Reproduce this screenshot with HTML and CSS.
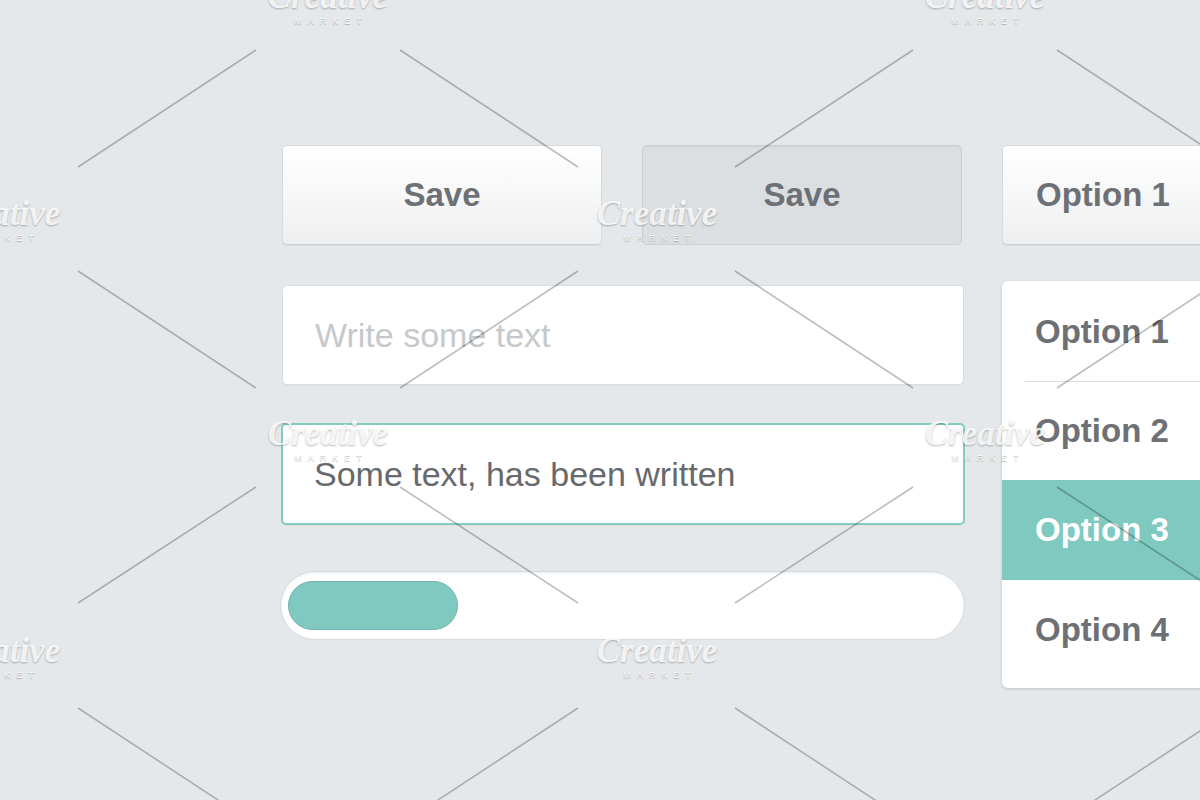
FILE: index.html
```html
<!DOCTYPE html>
<html lang="en">
<head>
<meta charset="utf-8">
<title>UI Kit</title>
<link rel="stylesheet" href="styles.css">
</head>
<body>
<main class="page">
  <section class="left">
    <div class="btn-row">
      <button class="btn">Save</button>
      <button class="btn pressed">Save</button>
    </div>
    <div class="input placeholder">Write some text</div>
    <div class="input active">Some text, has been written</div>
    <div class="progress"><div class="fill" style="width:25.4%"></div></div>
  </section>
  <section class="right">
    <button class="btn select">Option 1</button>
    <ul class="dropdown">
      <li class="opt first">Option 1</li>
      <li class="opt second">Option 2</li>
      <li class="opt sel">Option 3</li>
      <li class="opt">Option 4</li>
    </ul>
  </section>
</main>

<div class="watermark" aria-hidden="true">
  <svg class="wm-lines" width="1200" height="800" viewBox="0 0 1200 800">
    <g stroke="rgba(0,0,0,0.26)" stroke-width="1.6" fill="none">
      <line x1="256" y1="50" x2="78" y2="167"/>
      <line x1="400" y1="50" x2="578" y2="167"/>
      <line x1="913" y1="50" x2="735" y2="167"/>
      <line x1="1057" y1="50" x2="1235" y2="167"/>
      <line x1="78" y1="271" x2="256" y2="388"/>
      <line x1="578" y1="271" x2="400" y2="388"/>
      <line x1="735" y1="271" x2="913" y2="388"/>
      <line x1="1235" y1="271" x2="1057" y2="388"/>
      <line x1="256" y1="487" x2="78" y2="603"/>
      <line x1="400" y1="487" x2="578" y2="603"/>
      <line x1="913" y1="487" x2="735" y2="603"/>
      <line x1="1057" y1="487" x2="1235" y2="603"/>
      <line x1="78" y1="708" x2="256" y2="825"/>
      <line x1="578" y1="708" x2="400" y2="825"/>
      <line x1="735" y1="708" x2="913" y2="825"/>
      <line x1="1235" y1="708" x2="1057" y2="825"/>
    </g>
  </svg>
  <div class="wm wm-a"><span class="wm-name">Creative</span><span class="wm-sub">MARKET</span></div>
  <div class="wm wm-b"><span class="wm-name">Creative</span><span class="wm-sub">MARKET</span></div>
  <div class="wm wm-c"><span class="wm-name">Creative</span><span class="wm-sub">MARKET</span></div>
  <div class="wm wm-d"><span class="wm-name">Creative</span><span class="wm-sub">MARKET</span></div>
  <div class="wm wm-e"><span class="wm-name">Creative</span><span class="wm-sub">MARKET</span></div>
  <div class="wm wm-f"><span class="wm-name">Creative</span><span class="wm-sub">MARKET</span></div>
  <div class="wm wm-g"><span class="wm-name">Creative</span><span class="wm-sub">MARKET</span></div>
  <div class="wm wm-h"><span class="wm-name">Creative</span><span class="wm-sub">MARKET</span></div>
</div>
</body>
</html>
```

FILE: styles.css
```css
html, body {
  margin: 0;
  padding: 0;
}

body {
  position: relative;
  width: 1200px;
  height: 800px;
  overflow: hidden;
  background: #e5e8eb;
  font-family: "Liberation Sans", Arial, sans-serif;
}

.page {
  display: flex;
  gap: 38px;
  padding: 145px 0 0 282px;
}

.left {
  flex: 0 0 682px;
  display: flex;
  flex-direction: column;
}

.btn-row {
  display: flex;
  gap: 40px;
}

.btn {
  flex: 0 0 320px;
  height: 100px;
  box-sizing: border-box;
  margin: 0;
  padding: 0;
  border: 1px solid #d4dade;
  border-bottom-color: #c9d0d6;
  border-radius: 5px;
  background: linear-gradient(#ffffff, #eeeff0);
  box-shadow: 0 1px 1px rgba(0, 0, 0, 0.06);
  font-family: "Liberation Sans", Arial, sans-serif;
  font-weight: bold;
  font-size: 33px;
  color: #6d7074;
  display: flex;
  align-items: center;
  justify-content: center;
}

.btn.pressed {
  background: #dcdfe2;
  border-color: #cbd0d4;
  box-shadow: inset 0 1px 2px rgba(0, 0, 0, 0.06);
}

.input {
  box-sizing: border-box;
  margin-top: 40px;
  height: 100px;
  background: #ffffff;
  border: 1px solid #d6dee4;
  border-radius: 5px;
  padding-left: 32px;
  display: flex;
  align-items: center;
  font-size: 34px;
  color: #c6c9cc;
  box-shadow: 0 1px 1px rgba(0, 0, 0, 0.03);
}

.input.active {
  margin: 38px -1px 0 -1px;
  height: 102px;
  border: 2px solid #80cdc1;
  color: #67696c;
  padding-left: 31px;
}

.progress {
  box-sizing: border-box;
  margin: 46px -1px 0 -2px;
  height: 69px;
  border-radius: 35px;
  background: #ffffff;
  border: 1px solid #d5d9dc;
  box-shadow: inset 0 1px 3px rgba(0, 0, 0, 0.08);
  padding: 9px 7px;
}

.fill {
  box-sizing: border-box;
  height: 100%;
  border-radius: 25px;
  background: #80c9c1;
  border: 1px solid #6fb4ac;
}

.right {
  flex: 0 0 240px;
  display: flex;
  flex-direction: column;
}

.btn.select {
  flex: 0 0 100px;
  width: 240px;
  justify-content: flex-start;
  padding-left: 33px;
}

.dropdown {
  list-style: none;
  margin: 36px 0 0 0;
  padding: 0 0 8px 0;
  background: #ffffff;
  border-radius: 6px;
  box-shadow: 0 1px 3px rgba(0, 0, 0, 0.18);
}

.opt {
  height: 100px;
  box-sizing: border-box;
  display: flex;
  align-items: center;
  padding-left: 33px;
  font-weight: bold;
  font-size: 33px;
  color: #6d7074;
}

.opt.first {
  height: 101px;
  position: relative;
}

.opt.first::after {
  content: "";
  position: absolute;
  left: 23px;
  right: 0;
  bottom: 0;
  height: 1px;
  background: #dcdfe2;
}

.opt.second {
  height: 98px;
}

.opt.sel {
  background: #7fc9c1;
  color: #ffffff;
}

/* watermark overlay */
.watermark {
  position: absolute;
  left: 0;
  top: 0;
  width: 1200px;
  height: 800px;
  pointer-events: none;
}

.wm-lines {
  position: absolute;
  left: 0;
  top: 0;
}

.wm {
  position: absolute;
  width: 160px;
  margin-left: -80px;
  margin-top: -20px;
  display: flex;
  flex-direction: column;
  align-items: center;
}

.wm-name {
  font-family: "Liberation Serif", "Times New Roman", serif;
  font-style: italic;
  font-weight: bold;
  font-size: 35px;
  line-height: 38px;
  color: rgba(255, 255, 255, 0.85);
  text-shadow: 0 1px 2px rgba(0, 0, 0, 0.28);
}

.wm-sub {
  font-family: "Liberation Sans", Arial, sans-serif;
  font-size: 9px;
  letter-spacing: 6px;
  margin-left: 6px;
  line-height: 10px;
  color: rgba(255, 255, 255, 0.9);
  text-shadow: 0 1px 1px rgba(0, 0, 0, 0.3);
}

.wm-a { left: 328px; top: -2px; }
.wm-b { left: 985px; top: -2px; }
.wm-c { left: 0; top: 215px; }
.wm-d { left: 657px; top: 215px; }
.wm-e { left: 328px; top: 435px; }
.wm-f { left: 985px; top: 435px; }
.wm-g { left: 0; top: 652px; }
.wm-h { left: 657px; top: 652px; }
```
